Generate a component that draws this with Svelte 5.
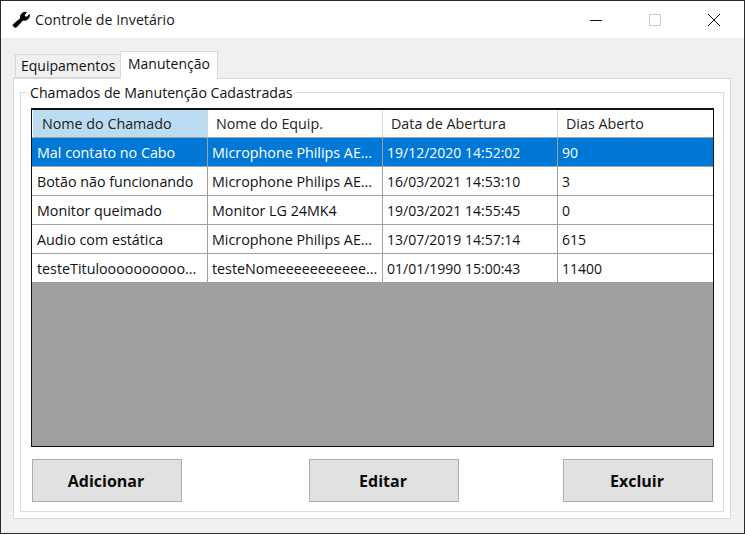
<script>
  const cols = ['Nome do Chamado', 'Nome do Equip.', 'Data de Abertura', 'Dias Aberto'];
  const rows = [
    ['Mal contato no Cabo', 'Microphone Philips AE...', '19/12/2020 14:52:02', '90'],
    ['Botão não funcionando', 'Microphone Philips AE...', '16/03/2021 14:53:10', '3'],
    ['Monitor queimado', 'Monitor LG 24MK4', '19/03/2021 14:55:45', '0'],
    ['Audio com estática', 'Microphone Philips AE...', '13/07/2019 14:57:14', '615'],
    ['testeTituloooooooooo...', 'testeNomeeeeeeeeeee...', '01/01/1990 15:00:43', '11400']
  ];
</script>

<div class="window">
  <header class="titlebar">
    <svg class="logo" width="18" height="18" viewBox="0 1 18 18">
      <path d="M1.5 14.2 L8.6 8.4 C8 5.8 9.2 3.4 11.4 2.6 C12.6 2.2 13.6 2.2 14.4 2.5 L12 5 L13.2 7 L15.4 6.9 L17.3 4.5 C17.8 6.6 16.6 9 14.4 9.9 C13 10.4 12 10.3 11 10 L5 16.6 C4 17.6 2.8 17.4 2 16.7 C1.1 15.9 0.8 15 1.5 14.2 Z" fill="#000" stroke="#000" stroke-width="0.9" stroke-linejoin="round"/>
    </svg>
    <span class="title">Controle de Invetário</span>
    <div class="controls">
      <svg width="14" height="14" viewBox="0 0 14 14"><path d="M1 7.5H13" stroke="#111" stroke-width="1"/></svg>
      <svg width="14" height="14" viewBox="0 0 14 14"><rect x="1.5" y="1.5" width="11" height="11" fill="none" stroke="#ccc"/></svg>
      <svg width="14" height="14" viewBox="0 0 14 14"><path d="M1 1L13 13M13 1L1 13" stroke="#111" stroke-width="1"/></svg>
    </div>
  </header>

  <main class="body">
    <nav class="tabs">
      <div class="tab">Equipamentos</div>
      <div class="tab active">Manutenção</div>
    </nav>
    <section class="panel">
      <fieldset class="group">
        <legend>Chamados de Manutenção Cadastradas</legend>
        <div class="table">
          <div class="row head">
            {#each cols as c, i}
              <div class="hcell" class:sel={i === 0}>{c}</div>
            {/each}
          </div>
          {#each rows as r, i}
            <div class="row" class:picked={i === 0}>
              {#each r as v, j}
                <div class="cell" class:num={j > 1}>{v}</div>
              {/each}
            </div>
          {/each}
        </div>
        <div class="actions">
          <button>Adicionar</button>
          <button class="mid">Editar</button>
          <button>Excluir</button>
        </div>
      </fieldset>
    </section>
  </main>
</div>

<style>
  :global(body) { margin: 0; background: #f0f0f0; }
  .window {
    width: 745px; height: 534px; box-sizing: border-box;
    border: 1px solid #2a2a2a;
    display: flex; flex-direction: column;
    font-family: "Open Sans", "Noto Sans", sans-serif;
    font-size: 14px; color: #111; background: #f0f0f0;
  }
  .titlebar {
    height: 37px; flex: none; background: #fff;
    display: flex; align-items: center; padding-left: 11px; box-sizing: border-box;
  }
  .logo { flex: none; margin-right: 5px; }
  .title { font-size: 14.2px; color: #1a1a1a; }
  .controls { margin-left: auto; display: flex; gap: 45px; margin-right: 23px; }
  .controls svg { display: block; }
  .body { flex: 1; padding: 12px 13px 14px 12px; display: flex; flex-direction: column; min-height: 0; }
  .tabs { display: flex; align-items: flex-end; height: 28px; flex: none; margin-left: 2px; position: relative; z-index: 1; }
  .tab {
    height: 24px; line-height: 21px; box-sizing: border-box;
    padding: 0 3px 0 5px; width: 106px;
    background: #f0f0f0; border: 1px solid #d9d9d9;
    white-space: nowrap;
  }
  .tab.active {
    height: 28px; line-height: 23px; width: 98px; background: #fff; margin-bottom: -1px;
    border-bottom: none; padding: 0 7px; margin-left: -1px;
  }
  .panel {
    flex: 1; min-height: 0; background: #fff; border: 1px solid #d9d9d9;
    padding: 4px 6px 6px 6px; display: flex;
  }
  .group {
    flex: 1; margin: 0; min-width: 0; border: 1px solid #d9d9d9; box-sizing: border-box;
    padding: 0 9px 9px 11px; display: flex; flex-direction: column;
  }
  legend { padding: 0 3px 0 2px; margin-left: -4px; line-height: 19px; height: 19px; font-size: 14.15px; }
  .table {
    height: 339px; flex: none; box-sizing: border-box; margin-top: 6px; margin-left: -1px;
    border: 1px solid #111; border-width: 2px 1px 1px 1px; background: #a0a0a0;
  }
  .row { display: grid; grid-template-columns: 176px 175px 175px 1fr; height: 29px; box-sizing: border-box; border-bottom: 1px solid #a0a0a0; background: #fff; font-size: 14.3px; }
  .row.head { height: 28px; border-bottom: 1px solid #a0a0a0; }
  .hcell { padding: 0 0 0 8px; line-height: 28px; border-right: 1px solid #d9d9d9; white-space: nowrap; overflow: hidden; color: #222; }
  .hcell:first-child { padding-left: 9px; margin-left: 1px; }
  .hcell.sel { background: #bcdcf4; }
  .cell { padding: 0 0 0 4px; line-height: 30px; border-right: 1px solid #a0a0a0; white-space: nowrap; overflow: hidden; color: #111; }
  .cell.num { font-size: 14px; }
  .cell:first-child { padding-left: 5px; }
  .cell:last-child, .hcell:last-child { border-right: none; }
  .row.picked { background: #0078d7; }
  .row.picked .cell { color: #fff; }
  .actions { display: flex; margin-top: 12px; padding-right: 1px; }
  button {
    width: 150px; height: 43px; background: #e1e1e1; border: 1px solid #adadad; border-radius: 0;
    font: bold 16px "Open Sans", "Noto Sans", sans-serif; color: #0a0a0a; padding: 0 2px 0 0;
  }
  .mid { margin-left: 127px; margin-right: 104px; }
</style>
